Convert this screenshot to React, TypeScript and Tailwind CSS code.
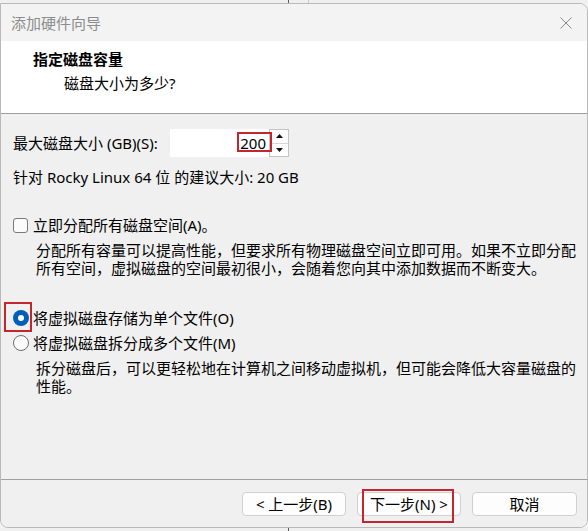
import { useState } from 'react'

const font = 'font-["Segoe_UI","Noto_Sans","Noto_Sans_CJK_SC",sans-serif]'

export default function App() {
  const [size, setSize] = useState('200')
  const [mode, setMode] = useState<'single' | 'split'>('single')
  const [allocate, setAllocate] = useState(false)

  return (
    <div className={`w-[588px] h-[531px] overflow-hidden bg-[#f3f3f3] text-[15px] text-black ${font}`}>
      {/* 뒤쪽 창의 가장자리 */}
      <div className="flex h-[3px] bg-[#f0f0f0]">
        <div className="w-[288px]" />
        <div className="w-px bg-[#5a5a5a]" />
        <div className="w-[19px]" />
        <div className="w-px bg-[#c8c8c8]" />
      </div>

      <div className="relative flex flex-col h-[525px] w-[588px] border border-[#b9b9b9] rounded-tr-[8px] rounded-bl-[8px] rounded-br-[8px] overflow-hidden">
        {/* 타이틀바 */}
        <div className="flex items-center justify-between h-[37px] pl-[10px] pr-[14px] bg-[#f3f3f3]">
          <span className="text-[15px] text-[#8c8c8c] leading-5">添加硬件向导</span>
          <svg width="12" height="12" viewBox="0 0 12 12" className="mr-[1px]">
            <path d="M0.5 0.5 L11.5 11.5 M11.5 0.5 L0.5 11.5" stroke="#8a8a8a" strokeWidth="1" />
          </svg>
        </div>

        {/* 헤더 */}
        <div className="h-[73px] bg-white border-b border-[#a0a0a0] pt-[8px]">
          <div className="pl-[32px] font-bold leading-5">指定磁盘容量</div>
          <div className="pl-[63px] mt-[4px] leading-5">磁盘大小为多少?</div>
        </div>

        {/* 본문 */}
        <div className="flex-1 flex flex-col bg-[#f0f0f0] pl-[12px] pt-[15px]">
          <div className="flex items-center h-[28px]">
            <span className="w-[157px] leading-5">最大磁盘大小 (GB)(S):</span>
            <div className="relative flex h-[28px]">
              <input
                value={size}
                onChange={(e) => setSize(e.target.value)}
                className="w-[99px] h-[28px] bg-white text-right pr-[3px] outline-none leading-5"
              />
              <div className="flex flex-col w-[20px] h-[28px] bg-white border border-[#c4c4c4]">
                <div className="flex-1 flex items-center justify-center border-b border-[#d6d6d6]">
                  <svg width="7" height="4" viewBox="0 0 7 4"><path d="M3.5 0 L7 4 L0 4 Z" fill="#111" /></svg>
                </div>
                <div className="flex-1 flex items-center justify-center">
                  <svg width="7" height="4" viewBox="0 0 7 4"><path d="M0 0 L7 0 L3.5 4 Z" fill="#111" /></svg>
                </div>
              </div>
              <div className="absolute left-[67px] top-[3px] w-[35px] h-[20px] border-2 border-[#c4262e]" />
            </div>
          </div>

          <div className="mt-[10px] leading-5">针对 Rocky Linux 64 位 的建议大小: 20 GB</div>

          <label className="flex items-center h-[20px] mt-[28px]" onClick={() => setAllocate(!allocate)}>
            <span className="w-[15px] h-[15px] rounded-[3px] border border-[#7a7a7a] bg-[#fbfbfb] mr-[5px] flex items-center justify-center">
              {allocate && (
                <svg width="10" height="8" viewBox="0 0 10 8"><path d="M1 4 L4 7 L9 1" stroke="#005fb8" strokeWidth="1.5" fill="none" /></svg>
              )}
            </span>
            <span className="leading-5">立即分配所有磁盘空间(A)。</span>
          </label>
          <div className="pl-[23px] mt-[6px] leading-[18px] pr-[8px]">
            <div>分配所有容量可以提高性能，但要求所有物理磁盘空间立即可用。如果不立即分配</div>
            <div>所有空间，虚拟磁盘的空间最初很小，会随着您向其中添加数据而不断变大。</div>
          </div>

          <div className="relative flex items-center h-[20px] mt-[31px]" onClick={() => setMode('single')}>
            <span
              className={`w-[16px] h-[16px] rounded-full mr-[4px] flex items-center justify-center ${
                mode === 'single' ? 'bg-[#005fb8]' : 'border border-[#6e6e6e] bg-[#fbfbfb]'
              }`}
            >
              {mode === 'single' && <span className="w-[6px] h-[6px] rounded-full bg-white" />}
            </span>
            <span className="leading-5">将虚拟磁盘存储为单个文件(O)</span>
            <div className="absolute left-[-9px] top-[-6px] w-[28px] h-[30px] border-2 border-[#c4262e]" />
          </div>
          <div className="flex items-center h-[20px] mt-[5px]" onClick={() => setMode('split')}>
            <span
              className={`w-[16px] h-[16px] rounded-full mr-[4px] flex items-center justify-center ${
                mode === 'split' ? 'bg-[#005fb8]' : 'border border-[#6e6e6e] bg-[#fbfbfb]'
              }`}
            >
              {mode === 'split' && <span className="w-[6px] h-[6px] rounded-full bg-white" />}
            </span>
            <span className="leading-5">将虚拟磁盘拆分成多个文件(M)</span>
          </div>
          <div className="pl-[23px] mt-[6px] leading-[18px] pr-[8px]">
            <div>拆分磁盘后，可以更轻松地在计算机之间移动虚拟机，但可能会降低大容量磁盘的</div>
            <div>性能。</div>
          </div>
        </div>

        {/* 하단 버튼 */}
        <div className="h-[48px] bg-[#f0f0f0] border-t border-[#a0a0a0] flex justify-end gap-[11px] pt-[12px] pr-[10px]">
          <button className="w-[104px] h-[24px] rounded-[4px] bg-[#fdfdfd] border border-[#d0d0d0] leading-5">
            &lt; 上一步(B)
          </button>
          <button className="relative w-[104px] h-[24px] rounded-[4px] bg-[#fdfdfd] border border-[#d0d0d0] leading-5">
            下一步(N) &gt;
            <span className="absolute left-[4px] top-[-4px] w-[92px] h-[34px] border-2 border-[#c4262e]" />
          </button>
          <button className="w-[105px] h-[24px] rounded-[4px] bg-[#fdfdfd] border border-[#d0d0d0] leading-5">
            取消
          </button>
        </div>
      </div>

      <div className="flex h-[3px] bg-[#f0f0f0]">
        <div className="w-[288px]" />
        <div className="w-px bg-[#5a5a5a]" />
      </div>
    </div>
  )
}
